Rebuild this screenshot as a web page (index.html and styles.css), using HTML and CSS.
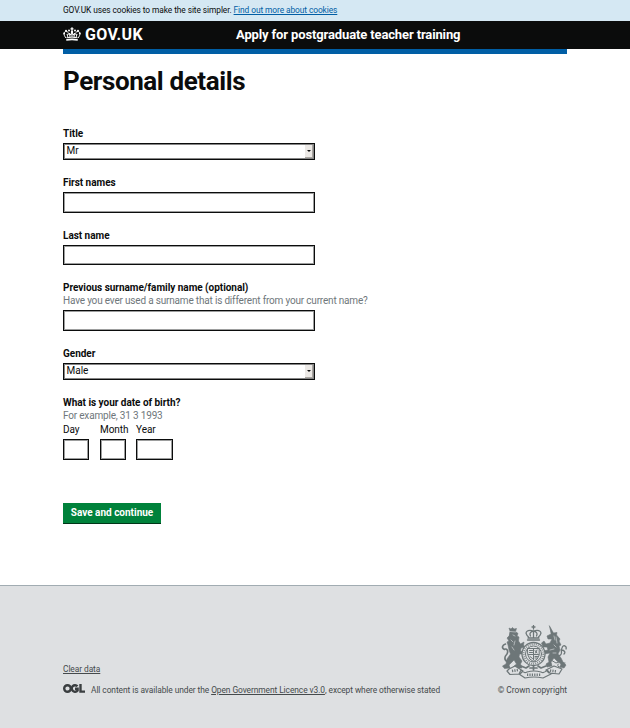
FILE: index.html
```html
<!DOCTYPE html>
<html lang="en">
<head>
<meta charset="utf-8">
<title>Personal details</title>
<link rel="stylesheet" href="styles.css">
</head>
<body>
<div class="cookie"><span class="cookie-text">GOV.UK uses cookies to make the site simpler.</span> <a class="cookie-link" href="#">Find out more about cookies</a></div>
<header class="header">
  <a class="logo" href="#">
    <svg class="crown" viewBox="0 0 18 14" fill="none" stroke="#fff">
      <path d="M3.200 13Q9 11.800 14.800 13" stroke-width="1.700"/>
      <path d="M3 11C0 7.500.8 4.500 3 4.500S5.800 6 5 8M15 11C18 7.500 17.200 4.500 15 4.500S12.200 6 13 8M5 10.500L4 7M13 10.500L14 7M7 10L6.500 6M11 10L11.500 6M9 10V5M3.500 10.800Q9 9.500 14.500 10.800" stroke-width="1"/>
      <path d="M9 .3V4M7.500 1.800H10.500M6.700 8L9 6.500L11.300 8" stroke-width="1.200"/>
      <g fill="#fff" stroke="none"><circle cx="3" cy="3.800" r="1"/><circle cx="6" cy="3.500" r="1"/><circle cx="12" cy="3.500" r="1"/><circle cx="15" cy="3.800" r="1"/><circle cx="1.200" cy="6.500" r=".9"/><circle cx="16.800" cy="6.500" r=".9"/><circle cx="9" cy="5" r="1.200"/></g>
    </svg>
    <span class="wordmark">GOV.UK</span>
  </a>
  <span class="service">Apply for postgraduate teacher training</span>
</header>
<main class="main">
  <h1>Personal details</h1>
  <form class="form">
    <div class="field"><label>Title</label><div class="select"><span>Mr</span><i></i></div></div>
    <div class="field"><label>First names</label><input class="input" type="text"></div>
    <div class="field"><label>Last name</label><input class="input" type="text"></div>
    <div class="field"><label>Previous surname/family name (optional)</label><span class="hint">Have you ever used a surname that is different from your current name?</span><input class="input" type="text"></div>
    <div class="field"><label>Gender</label><div class="select"><span>Male</span><i></i></div></div>
    <div class="field"><label>What is your date of birth?</label><span class="hint">For example, 31 3 1993</span>
      <div class="date"><div class="part"><span>Day</span><input class="input" type="text"></div><div class="part"><span>Month</span><input class="input" type="text"></div><div class="part year"><span>Year</span><input class="input" type="text"></div></div>
    </div>
    <button class="button" type="button">Save and continue</button>
  </form>
</main>
<footer class="footer">
  <div class="meta">
    <a class="clear" href="#">Clear data</a>
    <div class="licence">
      <svg class="ogl" viewBox="0 0 22 9" fill="none" stroke="#3a3e40" stroke-width="2.400"><circle cx="4.500" cy="4.500" r="3.300"/><path d="M14.500 2.300A3.300 3.300 0 1 0 14.600 6.600V4.700H12M17.500 0V7.600H22"/></svg>
      <p>All content is available under the <a href="#">Open Government Licence v3.0</a>, except where otherwise stated</p>
    </div>
  </div>
  <div class="copyright">
    <svg class="crest" viewBox="0 0 66 54" fill="none" stroke="#6d7678" stroke-linecap="round" stroke-linejoin="round">
      <!-- royal crown -->
      <g stroke-width="1.300"><path d="M32.500.5V4M31 2H34M26.500 15H38.500M27 13H38M27.500 12C22 7 27 4 32.500 6C38 4 43 7 37.500 12M29.500 11C28 8 30 6.500 32.500 6C35 6.500 37 8 35.500 11M32.500 6V12"/></g>
      <!-- lion -->
      <path fill="#6d7678" stroke-width=".6" d="M9 6L8 3L10 4L11.500 2.500L13 4L15.500 3.500L14.500 6.500L17 8.500L16 11L18 12L17.500 16L19.500 19L23 17L22.500 20L24 22L20 23L19.500 26L23 27L23.500 29L18.500 29L18 32L21 36L19.500 39L21 43L14 43L12 42L15.500 39L13 35L10 38L8 40L9 43L3.500 43.500L1.500 41L5 39L6 34L9.500 29L8 25L7 20L6 17L8 16L6 13L8 11Z"/>
      <path d="M7 37C2 35 4 31 6 29C8 25 5 23 3.500 24.500C0 23 1.500 20 4.500 19" stroke-width="1.600"/>
      <path d="M9 6.500L14.500 7M12 10L14 11M10 15L12 17M14 16L13 20M11 22L13 25" stroke="#dee0e2" stroke-width=".6"/>
      <!-- unicorn -->
      <path fill="#6d7678" stroke-width=".6" d="M48.500 1L52.500 8L56 7.500L55.500 10L59 14L58 16L60 20L58 21L59 25L57 29L60 33L62 37L65 40L63 43L59 42L60 39L56 36L53 33L50 37L51 41L46 42L45 39L48 37L47 32L49 28L43 29L42 26L47 25L46 22L42 22L40.500 18L43 16L45 19L49 18L51 14L47 14L46 11L50 9Z"/>
      <path d="M57 31C63 30 59 26 61 23C62 19 66 21 65 24M60 25C63 25 65 27 63 29" stroke-width="1.300"/>
      <path d="M53 11L54 15M55 12L56 18M53 20L55 22M49 25L53 24M52 28L55 28" stroke="#dee0e2" stroke-width=".6"/>
      <path d="M50 35L55 38L60 36M57 39A2 2 0 1 0 61 41M60 38H64" stroke-width="1"/>
      <!-- garter and shield -->
      <circle cx="32.500" cy="29" r="11.500" fill="#dee0e2" stroke-width="1.300"/>
      <circle cx="32.500" cy="29" r="9.800" stroke-width="1.800" stroke-dasharray=".8 1.300" stroke-linecap="butt"/>
      <circle cx="32.500" cy="29" r="8" stroke-width="1"/>
      <path d="M26.800 23.500H38.200V30Q37 35 32.500 36.500Q28 35 26.800 30ZM32.500 23.500V35M27.500 29.500H37.500M28.500 25.500H31.500M28.500 27.500H31.500M34 25.500L36 28M36 25L34.500 28M29 31.500L31.500 33.500M34 31.500H36.500M34 33H36" stroke-width="1"/>
      <!-- motto ribbon -->
      <path fill="#dee0e2" d="M8 44L14 41L22 46L19 49L9 49.500L6 46ZM20 45Q23 49 26 47Q33 45 40 47Q43 49 46 45L50 49L42 53Q33 51 24 53L18 49ZM45 45L53 41L61 44L58 49L48 48Z" stroke-width="1.200"/>
      <path d="M11 46L17 45M26 49.800H40M49 45.500L56 46.500" stroke-width="2.600" stroke-dasharray="1.200 1.200" stroke-linecap="butt"/>
      <path d="M20 41L25 43L28 41M37 41L40 43L45 41M32.500 41V45M29 43H36" stroke-width="1.700"/>
    </svg>
    <span>© Crown copyright</span>
  </div>
</footer>
</body>
</html>
```
FILE: styles.css
```css
* { box-sizing: border-box; }
body { margin: 0; min-height: 728px; display: flex; flex-direction: column; font-family: Roboto, "Liberation Sans", sans-serif; font-size: 10px; line-height: 13px; color: #0b0c0c; background: #fff; }
.cookie { height: 21px; padding: 0 63px; background: #d5e8f3; font-size: 8.4px; line-height: 20px; letter-spacing: -.09px; white-space: nowrap; }
.cookie a { color: #005ea5; }
.header { height: 28px; padding: 0 63px; background: #0b0c0c; color: #fff; display: flex; align-items: center; }
.logo { width: 173px; display: flex; align-items: center; gap: 4px; color: #fff; text-decoration: none; }
.crown { width: 18px; height: 14px; margin-top: -2px; }
.wordmark { font-size: 16px; font-weight: 700; letter-spacing: .35px; margin-top: -1px; }
.service { font-size: 13px; font-weight: 700; letter-spacing: -.13px; white-space: nowrap; margin-top: -2px; }
.main { margin: 0 63px; height: 536px; border-top: 5px solid #005ea5; }
h1 { margin: 12px 0 31px; font-size: 26px; line-height: 30px; font-weight: 700; letter-spacing: -.4px; }
.field { margin-bottom: 16px; white-space: nowrap; }
.field label { display: block; height: 13px; font-weight: 700; letter-spacing: -.03px; width: max-content; }
.hint { display: block; height: 13px; color: #6f777b; letter-spacing: -.185px; width: max-content; }
.input { display: block; width: 252px; height: 20.5px; margin-top: 3px; padding: 2px; border: 1px solid #0b0c0c; box-shadow: inset 0 0 0 1px rgba(11, 12, 12, .4); background: #fff; }
.select { display: flex; justify-content: space-between; width: 252px; height: 17px; margin-top: 3px; border: 1px solid #0b0c0c; box-shadow: inset 0 0 0 1px rgba(11, 12, 12, .5); padding: 1px 1px 1px 2.5px; line-height: 12px; }
.select i { display: flex; align-items: center; justify-content: center; width: 8px; height: 13px; background: #ece9e6; border-right: 1px solid #aaa6a2; border-bottom: 1px solid #aaa6a2; }
.select i::after { content: ""; border: 2px solid transparent; border-top-color: #0b0c0c; border-bottom: 0; }
.date { display: flex; gap: 11px; padding-top: 1px; }
.part { width: 26px; letter-spacing: -.04px; }
.part .input { width: 100%; height: 21px; }
.year { width: 37px; margin-left: -1px; }
.button { display: block; margin-top: 43px; width: 98px; height: 21px; padding: 0; border: 0; border-bottom: 1px solid #003618; background: #00823b; color: #fff; font: 700 10px Roboto, sans-serif; }
.footer { height: 143px; border-top: 1px solid #a1acb2; background: #dee0e2; padding: 0 63px; display: flex; justify-content: space-between; color: #454a4c; font-size: 8.4px; letter-spacing: -.07px; }
.footer a { color: #454a4c; }
.meta { padding-top: 77px; }
.licence { display: flex; gap: 6px; margin-top: 8px; }
.licence p { margin: 0; }
.ogl { width: 22px; height: 9px; }
.copyright { padding-top: 39px; text-align: right; letter-spacing: 0; }
.crest { display: block; width: 66px; height: 54px; margin: 0 0 5px auto; }
```
